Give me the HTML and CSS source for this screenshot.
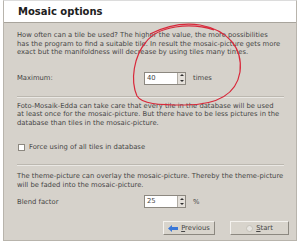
FILE: index.html
```html
<!DOCTYPE html>
<html lang="en">
<head>
    <meta charset="UTF-8">
    <title>Mosaic options</title>
    <link rel="stylesheet" href="styles.css">
</head>
<body>
    <div class="window">
        <div class="header">Mosaic options</div>

        <div class="content">
            <p class="text para1">How often can a tile be used? The higher the value, the more possibilities<br>has the program to find a suitable tile. In result the mosaic-picture gets more<br>exact but the manifoldness will decrease by using tiles many times.</p>
            <div class="field_row max_row">
                <span class="label">Maximum:</span>
                <span class="spin"><span class="spin_value">40</span><span class="spin_btn"><i class="up"></i><i class="down"></i></span></span>
                <span class="unit">times</span>
            </div>

            <div class="sep sep1"></div>

            <p class="text para2">Foto-Mosaik-Edda can take care that every tile in the database will be used<br>at least once for the mosaic-picture. But there have to be less pictures in the<br>database than tiles in the mosaic-picture.</p>
            <div class="check_row"><span class="check"></span>Force using of all tiles in database</div>

            <div class="sep sep2"></div>

            <p class="text para3">The theme-picture can overlay the mosaic-picture. Thereby the theme-picture<br>will be faded into the mosaic-picture.</p>
            <div class="field_row blend_row">
                <span class="label">Blend factor</span>
                <span class="spin"><span class="spin_value">25</span><span class="spin_btn"><i class="up"></i><i class="down"></i></span></span>
                <span class="unit">%</span>
            </div>

            <div class="buttons">
                <button class="btn prev">
                    <svg width="10" height="7" viewBox="0 0 10 7"><path d="M0 3.5 L4 0 L4 2 L10 2 L10 5 L4 5 L4 7 Z" fill="#3a78d8"/></svg>
                    <span><u>P</u>revious</span>
                </button>
                <button class="btn start">
                    <svg width="7" height="7" viewBox="0 0 7 7"><circle cx="3.5" cy="3.5" r="3" fill="#e8e6e2" stroke="#c4c0b8"/></svg>
                    <span><u>S</u>tart</span>
                </button>
            </div>
        </div>
    </div>

    <svg class="mark" width="300" height="245" viewBox="0 0 300 245">
        <path d="M214 30 C190 22 158 26 146 42 C134 56 130 80 137 96 C142 104 158 105 185 105 C215 105 236 96 240 72 C243 48 228 30 200 25 C180 22 162 28 150 34" fill="none" stroke="#d8283a" stroke-width="1.2"/>
    </svg>
</body>
</html>
```

FILE: styles.css
```css
body {
    margin: 0;
    background-color: #ffffff;
    font-family: "DejaVu Sans", Tahoma, sans-serif;
    color: #464646;
}

.window {
    width: 294px;
    height: 241px;
    margin: 0 0 0 3px;
    border: 1px solid #b8b4ac;
    border-top-color: #dcdcdc;
    background-color: #d6d2cb;
    box-sizing: border-box;
    overflow: hidden;
}

.header {
    height: 22px;
    background-color: #ffffff;
    border-bottom: 1px solid #a8a49c;
    padding-left: 14px;
    font-size: 10px;
    font-weight: bold;
    line-height: 21px;
    color: #202020;
    box-sizing: border-box;
}

.content {
    padding: 8px 7px 0 13px;
}

.text {
    margin: 0;
    font-size: 6.8px;
    line-height: 8.5px;
    white-space: nowrap;
}

.field_row {
    display: flex;
    align-items: center;
    height: 13px;
    font-size: 6.8px;
}

.max_row {
    margin-top: 15px;
}

.blend_row {
    margin-top: 6px;
}

.field_row .label {
    width: 127px;
}

.spin {
    display: flex;
    width: 42px;
    height: 13px;
    border: 1px solid #8c8880;
    background-color: #ffffff;
    box-sizing: border-box;
}

.spin_value {
    flex: 1;
    padding-left: 2px;
    line-height: 11px;
}

.spin_btn {
    display: flex;
    flex-direction: column;
    width: 7px;
    border-left: 1px solid #b0aca4;
    background-color: #e4e0da;
}

.spin_btn i {
    flex: 1;
    display: flex;
    align-items: center;
    justify-content: center;
}

.spin_btn .up::before {
    content: "";
    border: 2px solid transparent;
    border-bottom-color: #303030;
    border-top: 0;
}

.spin_btn .down::before {
    content: "";
    border: 2px solid transparent;
    border-top-color: #303030;
    border-bottom: 0;
}

.unit {
    margin-left: 7px;
}

.sep {
    height: 0;
    margin-right: 5px;
    border-top: 1px solid #bcb8b0;
    border-bottom: 1px solid #eae8e4;
}

.sep1 {
    margin-top: 11px;
    margin-bottom: 4px;
}

.sep2 {
    margin-top: 13px;
    margin-bottom: 6px;
}

.check_row {
    display: flex;
    align-items: center;
    height: 8px;
    margin-top: 16px;
    font-size: 6.8px;
    line-height: 8px;
}

.check {
    width: 7px;
    height: 7px;
    border: 1px solid #8c8880;
    background-color: #ffffff;
    margin: 0 4px 0 1px;
    box-sizing: border-box;
}

.buttons {
    display: flex;
    justify-content: flex-end;
    gap: 15px;
    margin-top: 13px;
}

.btn {
    display: flex;
    align-items: center;
    justify-content: center;
    gap: 3px;
    height: 14px;
    padding: 0;
    border: 1px solid;
    border-color: #f4f2ee #8c8880 #8c8880 #f4f2ee;
    background-color: #d8d4cc;
    font-family: "DejaVu Sans", Tahoma, sans-serif;
    font-size: 6.8px;
    color: #464646;
}

.prev {
    width: 52px;
}

.start {
    width: 59px;
}

.mark {
    position: absolute;
    left: 0;
    top: 0;
    pointer-events: none;
}
```
